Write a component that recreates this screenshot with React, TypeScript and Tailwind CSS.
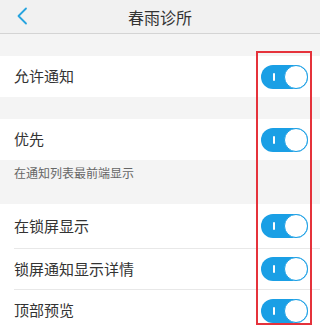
import React from "react";

const font = { fontFamily: '"Noto Sans CJK SC", "Noto Sans", sans-serif' };

function Toggle() {
  return (
    <div className="relative w-[47px] h-[24px] rounded-full bg-[#1a9fe5] flex items-center">
      <div className="absolute left-[12px] top-[8px] w-[2px] h-[8px] bg-white rounded-sm" />
      <div className="absolute right-0 top-0 w-[24px] h-[24px] rounded-full bg-white border-[1.5px] border-[#1a9fe5]" />
    </div>
  );
}

function Row({ label, h, divider }: { label: string; h: string; divider?: boolean }) {
  return (
    <div className={`bg-white pl-[14px] ${h}`}>
      <div className={`h-full flex items-center justify-between pr-[12px] ${divider ? "border-b border-[#e8e8e8]" : ""}`}>
        <span className="text-[15px] text-[#333]">{label}</span>
        <Toggle />
      </div>
    </div>
  );
}

export default function App() {
  return (
    <div className="relative w-[320px] h-[326px] overflow-hidden bg-[#f4f4f4]" style={font}>
      <div className="h-[34px] bg-[#f1f1f1] border-b border-[#d4d4d4] relative flex items-center justify-center">
        <svg className="absolute left-[16px] top-[7px]" width="12" height="18" viewBox="0 0 12 18">
          <path d="M10 1.5 L2.5 9 L10 16.5" fill="none" stroke="#27a4df" strokeWidth="1.8" strokeLinecap="round" strokeLinejoin="round" />
        </svg>
        <span className="text-[16px] text-[#333]">春雨诊所</span>
      </div>
      <div className="h-[22px]" />
      <Row label="允许通知" h="h-[41px]" />
      <div className="h-[22px]" />
      <Row label="优先" h="h-[41px]" />
      <div className="h-[44px] pl-[14px] pt-[4px] text-[12px] leading-[18px] text-[#666]">
        在通知列表最前端显示
      </div>
      <Row label="在锁屏显示" h="h-[45px]" divider />
      <Row label="锁屏通知显示详情" h="h-[41px]" divider />
      <Row label="顶部预览" h="h-[41px]" />
      <div className="absolute left-[256px] top-[51px] w-[56px] h-[274px] border-2 border-[#e5323b]" />
    </div>
  );
}
